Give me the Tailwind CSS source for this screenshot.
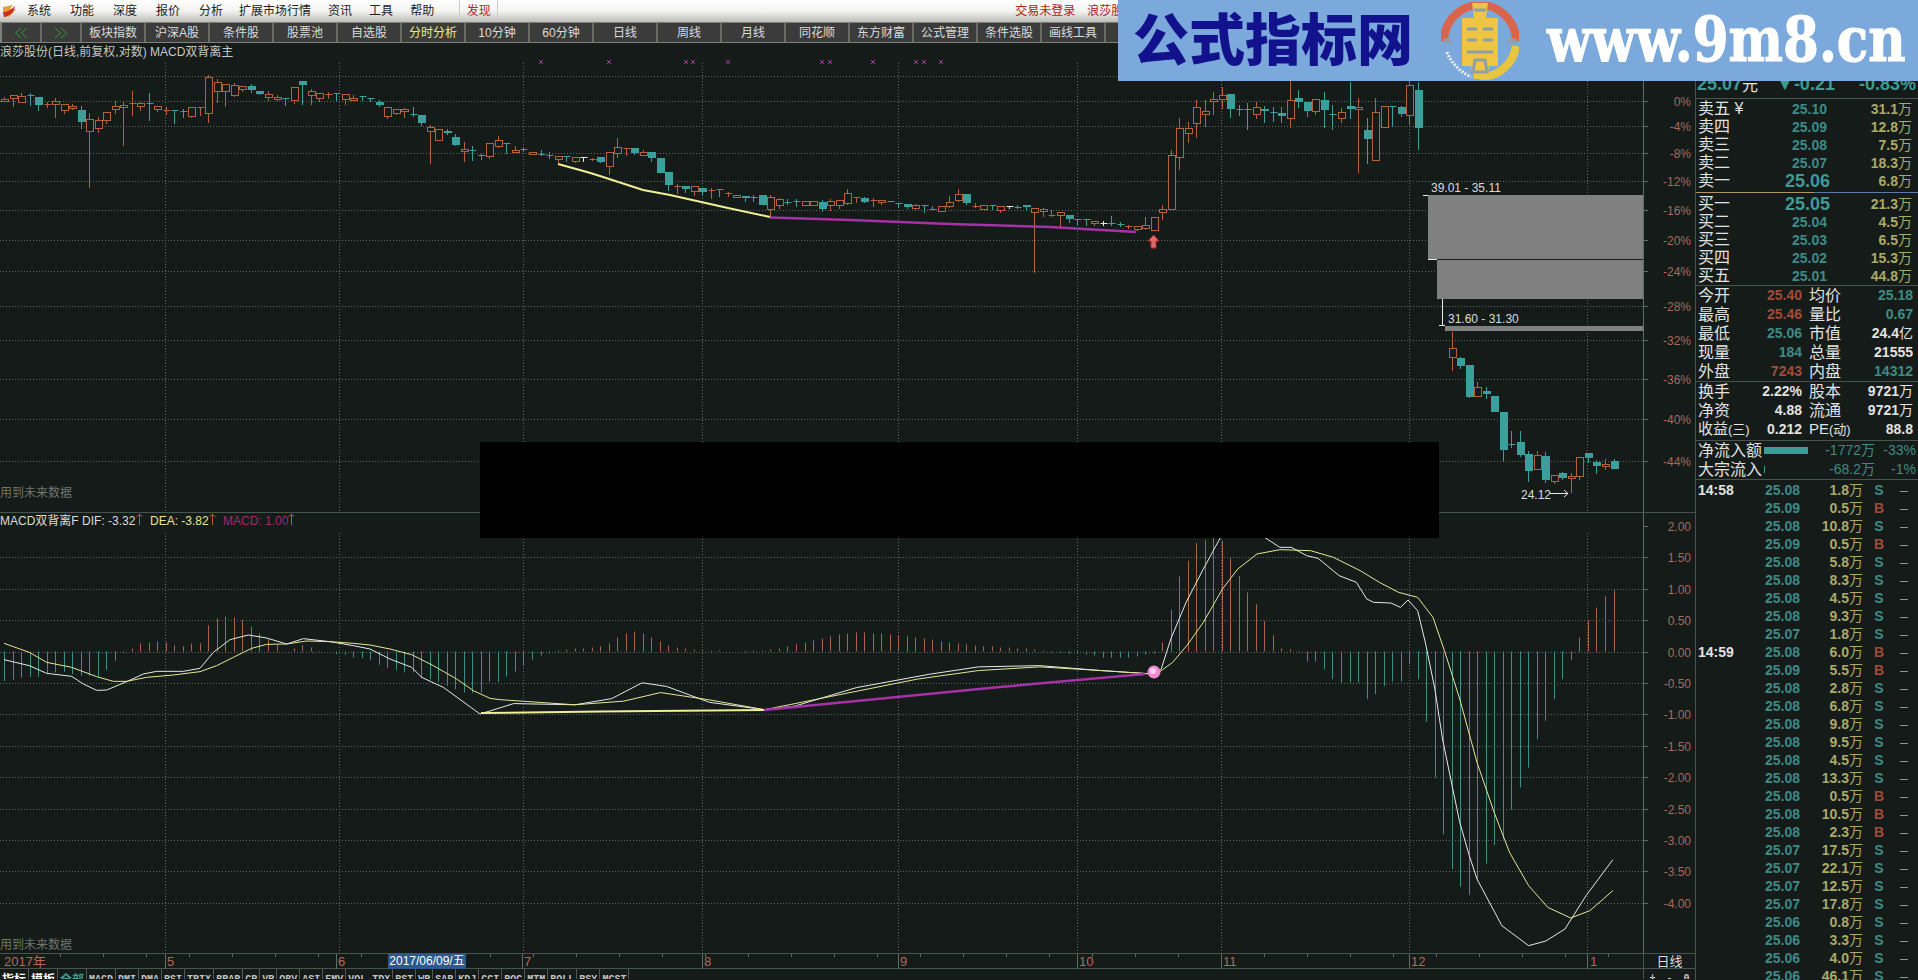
<!DOCTYPE html>
<html lang="zh-CN">

<head>
  <meta charset="UTF-8" />
  <title>浪莎股份 日线</title>
  <script src="https://cdn.jsdelivr.net/npm/@tailwindcss/browser@4"></script>
</head>

<body class="bg-[#141b18] font-['Liberation_Sans','Noto_Sans_CJK_SC',sans-serif]">
  <div class="relative w-[1918px] h-[980px] overflow-hidden">

    <!-- menu -->
    <div class="h-[22px] flex items-center bg-gradient-to-b from-white via-[#f3f3f3] to-[#bdbdb8] text-[12px] text-[#222]">
      <svg class="ml-[2px] w-[15px] h-[14px]" viewBox="0 0 15 14">
        <path d="M1 3 L11 1 L8 5 L14 5 L7 13 L1 10 Z" fill="#e8a030" />
        <path d="M1 8 Q7 8 13 2 L11 8 Q6 13 2 13 Z" fill="#c8321e" />
      </svg>
      <div class="ml-[10px] flex gap-[19px]"><span>系统</span><span>功能</span><span>深度</span><span>报价</span><span>分析</span></div>
      <div class="ml-[16px] flex gap-[17px]"><span>扩展市场行情</span><span>资讯</span><span>工具</span><span>帮助</span></div>
      <div class="ml-[25px] w-[39px] h-full flex items-center justify-center border-x border-[#ccc] text-[#b02828]">发现</div>
      <div class="ml-[517px] flex gap-[12px] text-[#b02020]"><span>交易未登录</span><span>浪莎股份</span></div>
    </div>

    <!-- toolbar -->
    <div class="h-[21px] flex bg-[#80807a] py-[1px] pl-[2px] text-[12px] text-[#dcdcdc]">
      <div class="w-[40px] shrink-0 flex items-center justify-center bg-[#3b3b3b] border-r-2 border-[#6a6a62]">
        <svg width="14" height="12" viewBox="0 0 14 12" fill="none" stroke="#2f9f2f"><path d="M7 1L1.500 6L7 11M13 1L7.500 6L13 11" /></svg>
      </div>
      <div class="w-[40px] shrink-0 flex items-center justify-center bg-[#3b3b3b] border-r-2 border-[#6a6a62]">
        <svg width="14" height="12" viewBox="0 0 14 12" fill="none" stroke="#2f9f2f"><path d="M1 1L6.500 6L1 11M7 1L12.500 6L7 11" /></svg>
      </div>
      <div class="w-[64px] shrink-0 flex items-center justify-center bg-[#3b3b3b] border-r-2 border-[#6a6a62]">板块指数</div>
      <div class="w-[64px] shrink-0 flex items-center justify-center bg-[#3b3b3b] border-r-2 border-[#6a6a62]">沪深A股</div>
      <div class="w-[64px] shrink-0 flex items-center justify-center bg-[#3b3b3b] border-r-2 border-[#6a6a62]">条件股</div>
      <div class="w-[64px] shrink-0 flex items-center justify-center bg-[#3b3b3b] border-r-2 border-[#6a6a62]">股票池</div>
      <div class="w-[64px] shrink-0 flex items-center justify-center bg-[#3b3b3b] border-r-2 border-[#6a6a62]">自选股</div>
      <div class="w-[64px] shrink-0 flex items-center justify-center bg-[#3b3b3b] border-r-2 border-[#6a6a62] text-[#eeee80]">分时分析</div>
      <div class="w-[64px] shrink-0 flex items-center justify-center bg-[#3b3b3b] border-r-2 border-[#6a6a62]">10分钟</div>
      <div class="w-[64px] shrink-0 flex items-center justify-center bg-[#3b3b3b] border-r-2 border-[#6a6a62]">60分钟</div>
      <div class="w-[64px] shrink-0 flex items-center justify-center bg-[#3b3b3b] border-r-2 border-[#6a6a62]">日线</div>
      <div class="w-[64px] shrink-0 flex items-center justify-center bg-[#3b3b3b] border-r-2 border-[#6a6a62]">周线</div>
      <div class="w-[64px] shrink-0 flex items-center justify-center bg-[#3b3b3b] border-r-2 border-[#6a6a62]">月线</div>
      <div class="w-[64px] shrink-0 flex items-center justify-center bg-[#3b3b3b] border-r-2 border-[#6a6a62]">同花顺</div>
      <div class="w-[64px] shrink-0 flex items-center justify-center bg-[#3b3b3b] border-r-2 border-[#6a6a62]">东方财富</div>
      <div class="w-[64px] shrink-0 flex items-center justify-center bg-[#3b3b3b] border-r-2 border-[#6a6a62]">公式管理</div>
      <div class="w-[64px] shrink-0 flex items-center justify-center bg-[#3b3b3b] border-r-2 border-[#6a6a62]">条件选股</div>
      <div class="w-[64px] shrink-0 flex items-center justify-center bg-[#3b3b3b] border-r-2 border-[#6a6a62]">画线工具</div>
      <div class="w-[64px] shrink-0 flex items-center justify-center bg-[#3b3b3b] border-r-2 border-[#6a6a62]">设置</div>
    </div>

    <div class="flex h-[937px]">
      <!-- charts -->
      <div class="w-[1695px] shrink-0 flex flex-col">
        <div class="h-[470px] border-b border-[#46564f]">
          <svg class="block text-[12px]" width="1695" height="469" viewBox="0 43 1695 469">
            <g id="main-grid"></g>
            <rect x="1428" y="195" width="215" height="64" fill="#808080" />
            <rect x="1437" y="260" width="206" height="39" fill="#808080" />
            <rect x="1445" y="326" width="198" height="5" fill="#808080" />
            <path d="M1423 195.500H1428M1428 259.500H1437M1442.500 299V325M1439 325.500H1445" stroke="#e8e8e8" />
            <text x="1431" y="192" fill="#dcdcdc">39.01 - 35.11</text>
            <text x="1448" y="323" fill="#dcdcdc">31.60 - 31.30</text>
            <text x="1521" y="499" fill="#dcdcdc">24.12</text>
            <path d="M1550 493.500H1568M1564 490L1568 493.500L1564 497" stroke="#e8e8e8" fill="none" />
            <g id="candles"></g>
            <polyline fill="none" stroke="#f0ef96" stroke-width="2" points="558,164 587,172 600,176 643,190 670,195 728,208 770,217" />
            <polyline fill="none" stroke="#a632a6" stroke-width="2.500" points="770,217.500 850,220 950,224 1050,227 1136,232" />
            <path d="M1153.600 235L1159 241H1156V248H1151V241H1148Z" fill="#e06a6a" stroke="#c02c2c" />
            <g id="marks" stroke="#a03aa0"></g>
            <text x="0" y="56" font-size="12" fill="#c8c8c8">浪莎股份(日线,前复权,对数) MACD双背离主</text>
            <text x="0" y="497" font-size="12" fill="#70766f">用到未来数据</text>
          </svg>
        </div>
        <div class="h-[440px]">
          <svg class="block text-[12px]" width="1695" height="440" viewBox="0 514 1695 440">
            <g id="macd-grid"></g>
            <g id="macd-bars"></g>
            <polyline id="dif" fill="none" stroke="#e8e8e8" />
            <polyline id="dea" fill="none" stroke="#e6e69a" />
            <polyline fill="none" stroke="#f0ef96" stroke-width="2" points="481,714 600,712.500 764,711" />
            <polyline fill="none" stroke="#a632a6" stroke-width="2.500" points="764,711 1000,688 1145,675" />
            <circle cx="1154" cy="673" r="6.500" fill="#f08ad0" />
            <circle cx="1153" cy="672" r="3" fill="#fbd0ee" />
            <text x="0" y="526" font-size="12" fill="#dcdcdc">MACD双背离F</text>
            <text x="82" y="526" font-size="12" fill="#dcdcdc">DIF: -3.32</text>
            <text x="150" y="526" font-size="12" fill="#e6e69a">DEA: -3.82</text>
            <text x="223" y="526" font-size="12" fill="#a8286c">MACD: 1.00</text>
            <path d="M139.500 526V515M136.500 518L139.500 515L142.500 518M212.500 526V515M209.500 518L212.500 515L215.500 518M291.500 526V515M288.500 518L291.500 515L294.500 518" stroke="#b5603c" fill="none" />
            <text x="0" y="950" font-size="12" fill="#70766f">用到未来数据</text>
          </svg>
        </div>
        <!-- date axis -->
        <div class="h-4 flex border-y border-[#46564f] text-[13px] leading-[15px] text-[#b8685a]">
          <div class="relative w-[1643px] shrink-0">
            <svg id="date-ticks" class="absolute inset-0" width="1643" height="15"></svg>
            <span class="absolute left-[4px]">2017年</span>
            <span class="absolute left-[167px]">5</span>
            <span class="absolute left-[338px]">6</span>
            <span class="absolute left-[524px]">7</span>
            <span class="absolute left-[704px]">8</span>
            <span class="absolute left-[900px]">9</span>
            <span class="absolute left-[1079px]">10</span>
            <span class="absolute left-[1223px]">11</span>
            <span class="absolute left-[1411px]">12</span>
            <span class="absolute left-[1590px]">1</span>
            <span class="absolute left-[388px] w-[78px] h-[15px] bg-[#2c5a8c] text-center text-[12px] text-white whitespace-nowrap">2017/06/09/五</span>
          </div>
          <div class="flex-1 border-l border-[#46564f] text-center text-[13px] text-[#dcdcdc]">日线</div>
        </div>
        <!-- indicator tabs -->
        <div class="h-[10px] flex overflow-hidden font-['Liberation_Mono','Noto_Sans_CJK_SC',monospace] text-[10px] font-bold text-[#c4c4c4]">
          <div id="tabs" class="flex"></div>
          <div class="ml-auto w-[52px] flex justify-around border-l border-[#46564f] pt-[2px]"><span>+</span><span>-</span><span>0</span></div>
        </div>
      </div>

      <!-- quote panel -->
      <div class="w-[223px] border-l border-[#46564f] text-[16px] text-[#e2e2e2]">
        <div class="h-[56px] pl-[1px] flex items-end border-b border-[#46564f] text-[18px] font-bold text-[#3f9a95]">
          <span>25.07</span><span class="font-normal text-[#e2e2e2] text-[16px]">元</span>
          <span class="ml-[18px]">▼-0.21</span><span class="ml-auto pr-[2px]">-0.83%</span>
        </div>
        <div class="pl-[2px] pt-px">
          <div class="flex h-[18px] items-center"><span class="w-[70px]">卖五 ¥</span><span class="w-[59px] text-right text-[14px] font-bold text-[#3f8a85]">25.10</span><span class="w-[85px] text-right text-[14px] font-bold text-[#aaaa68]">31.1<span class="font-normal">万</span></span></div>
          <div class="flex h-[18px] items-center"><span class="w-[70px]">卖四</span><span class="w-[59px] text-right text-[14px] font-bold text-[#3f8a85]">25.09</span><span class="w-[85px] text-right text-[14px] font-bold text-[#aaaa68]">12.8<span class="font-normal">万</span></span></div>
          <div class="flex h-[18px] items-center"><span class="w-[70px]">卖三</span><span class="w-[59px] text-right text-[14px] font-bold text-[#3f8a85]">25.08</span><span class="w-[85px] text-right text-[14px] font-bold text-[#aaaa68]">7.5<span class="font-normal">万</span></span></div>
          <div class="flex h-[18px] items-center"><span class="w-[70px]">卖二</span><span class="w-[59px] text-right text-[14px] font-bold text-[#3f8a85]">25.07</span><span class="w-[85px] text-right text-[14px] font-bold text-[#aaaa68]">18.3<span class="font-normal">万</span></span></div>
          <div class="flex h-[18px] items-center"><span class="w-[70px]">卖一</span><span class="w-[62px] text-right text-[18px] font-bold text-[#3f9a95]">25.06</span><span class="w-[82px] text-right text-[14px] font-bold text-[#aaaa68]">6.8<span class="font-normal">万</span></span></div>
        </div>
        <div class="flex h-[3px] items-end"><span class="w-[118px] h-px bg-[#b09468]"></span><span class="flex-1 h-px bg-[#5c7aa8]"></span></div>
        <div class="pl-[2px] pt-[2px] border-b border-[#46564f]">
          <div class="flex h-[18px] items-center"><span class="w-[70px]">买一</span><span class="w-[62px] text-right text-[18px] font-bold text-[#3f9a95]">25.05</span><span class="w-[82px] text-right text-[14px] font-bold text-[#aaaa68]">21.3<span class="font-normal">万</span></span></div>
          <div class="flex h-[18px] items-center"><span class="w-[70px]">买二</span><span class="w-[59px] text-right text-[14px] font-bold text-[#3f8a85]">25.04</span><span class="w-[85px] text-right text-[14px] font-bold text-[#aaaa68]">4.5<span class="font-normal">万</span></span></div>
          <div class="flex h-[18px] items-center"><span class="w-[70px]">买三</span><span class="w-[59px] text-right text-[14px] font-bold text-[#3f8a85]">25.03</span><span class="w-[85px] text-right text-[14px] font-bold text-[#aaaa68]">6.5<span class="font-normal">万</span></span></div>
          <div class="flex h-[18px] items-center"><span class="w-[70px]">买四</span><span class="w-[59px] text-right text-[14px] font-bold text-[#3f8a85]">25.02</span><span class="w-[85px] text-right text-[14px] font-bold text-[#aaaa68]">15.3<span class="font-normal">万</span></span></div>
          <div class="flex h-[18px] items-center"><span class="w-[70px]">买五</span><span class="w-[59px] text-right text-[14px] font-bold text-[#3f8a85]">25.01</span><span class="w-[85px] text-right text-[14px] font-bold text-[#aaaa68]">44.8<span class="font-normal">万</span></span></div>
        </div>
        <div class="pl-[2px] border-b border-[#46564f]">
          <div class="flex h-[19px] items-center"><span class="w-[48px]">今开</span><span class="w-[56px] text-right text-[14px] font-bold text-[#a04c3c]">25.40</span><span class="ml-[7px] w-[50px]">均价</span><span class="w-[54px] text-right text-[14px] font-bold text-[#3f8a85]">25.18</span></div>
          <div class="flex h-[19px] items-center"><span class="w-[48px]">最高</span><span class="w-[56px] text-right text-[14px] font-bold text-[#a04c3c]">25.46</span><span class="ml-[7px] w-[50px]">量比</span><span class="w-[54px] text-right text-[14px] font-bold text-[#3f8a85]">0.67</span></div>
          <div class="flex h-[19px] items-center"><span class="w-[48px]">最低</span><span class="w-[56px] text-right text-[14px] font-bold text-[#3f8a85]">25.06</span><span class="ml-[7px] w-[50px]">市值</span><span class="w-[54px] text-right text-[14px] font-bold">24.4<span class="font-normal">亿</span></span></div>
          <div class="flex h-[19px] items-center"><span class="w-[48px]">现量</span><span class="w-[56px] text-right text-[14px] font-bold text-[#3f8a85]">184</span><span class="ml-[7px] w-[50px]">总量</span><span class="w-[54px] text-right text-[14px] font-bold">21555</span></div>
          <div class="flex h-[19px] items-center"><span class="w-[48px]">外盘</span><span class="w-[56px] text-right text-[14px] font-bold text-[#a04c3c]">7243</span><span class="ml-[7px] w-[50px]">内盘</span><span class="w-[54px] text-right text-[14px] font-bold text-[#3f8a85]">14312</span></div>
        </div>
        <div class="pl-[2px] pb-[1px] border-b border-[#46564f]">
          <div class="flex h-[19px] items-center"><span class="w-[48px]">换手</span><span class="w-[56px] text-right text-[14px] font-bold">2.22%</span><span class="ml-[7px] w-[50px]">股本</span><span class="w-[54px] text-right text-[14px] font-bold">9721<span class="font-normal">万</span></span></div>
          <div class="flex h-[19px] items-center"><span class="w-[48px]">净资</span><span class="w-[56px] text-right text-[14px] font-bold">4.88</span><span class="ml-[7px] w-[50px]">流通</span><span class="w-[54px] text-right text-[14px] font-bold">9721<span class="font-normal">万</span></span></div>
          <div class="flex h-[19px] items-center"><span class="w-[52px] whitespace-nowrap text-[15px]">收益<span class="text-[13px]">(三)</span></span><span class="w-[52px] text-right text-[14px] font-bold">0.212</span><span class="ml-[7px] w-[50px] whitespace-nowrap text-[15px]">PE<span class="text-[13px]">(动)</span></span><span class="w-[54px] text-right text-[14px] font-bold">88.8</span></div>
        </div>
        <div class="pl-[2px] border-b border-[#46564f]">
          <div class="flex h-[19px] items-center"><span class="w-[66px] whitespace-nowrap">净流入额</span><span class="w-[44px] h-[7px] bg-[#3f9a95]"></span><span class="w-[67px] text-right text-[14px] text-[#3f8a85]">-1772<span>万</span></span><span class="w-[41px] text-right text-[14px] text-[#3f8a85]">-33%</span></div>
          <div class="flex h-[19px] items-center"><span class="w-[66px] whitespace-nowrap">大宗流入</span><span class="w-[44px] h-[7px]"><span class="block w-px h-full bg-[#3f9a95]"></span></span><span class="w-[67px] text-right text-[14px] text-[#3f8a85]">-68.2<span>万</span></span><span class="w-[41px] text-right text-[14px] text-[#3f8a85]">-1%</span></div>
        </div>
        <div id="ticks" class="pl-[2px] pt-px"></div>
      </div>
    </div>

    <!-- black cover over the chart -->
    <div class="absolute left-[480px] top-[442px] w-[959px] h-[96px] bg-black"></div>

    <!-- site banner on top -->
    <div class="absolute left-[1118px] top-0 w-[800px] h-[81px] flex items-center bg-[#7ba9db]">
      <span class="ml-[15px] w-[277px] text-[56px] leading-none font-black text-[#12128c] whitespace-nowrap">公式指标网</span>
      <svg class="ml-[31px] shrink-0" width="78" height="78" viewBox="0 0 78 78">
        <path d="M3 39A36 36 0 0 1 75 39" fill="none" stroke="#d9654c" stroke-width="8" />
        <path d="M75 44A36 36 0 0 1 39 75" fill="none" stroke="#e9c53f" stroke-width="8" />
        <path d="M3 39H11M67 39H75" stroke="#8f9ea8" stroke-width="5" />
        <path d="M31 1H47L45 16H57V64H48L46 77H33L30 64H21V16H33Z" fill="#eec643" />
        <path d="M33 8H45M26 27H36M42 27H52M26 38H36M42 38H52M26 50H52M34 58H44L46 70H32Z" stroke="#8f9ea8" stroke-width="3" fill="none" />
        <path d="M6 50Q12 66 30 75" fill="none" stroke="#f2f2f2" stroke-width="3" stroke-dasharray="2 1.500" />
      </svg>
      <span class="ml-[28px] text-[51.500px] leading-none font-['DejaVu_Serif',serif] font-bold text-white scale-y-[1.2] [-webkit-text-stroke:1px_white] whitespace-nowrap">www.9m8.cn</span>
    </div>
  </div>

  <script>
    // candle: type body-top body-bottom high low, read off the chart
    const SEGMENTS = [
      { from: 0, base: 60, rows: "r 118 122 112 126;r 106 113 106 140;r 108 125 100 126;g 104 106 100 138;g 112 135 112 152;r 131 136 125 145;r 124 133 115 173;r 133 150 133 161;r 139 143 131 150;g 150 186 137 208;r 178 212 158 383;r 181 204 172 218;r 157 179 157 191;r 139 148 124 161;r 136 140 126 258;r 129 133 94 167;r 130 138 125 152;g 130 133 100 182;r 137 148 137 156;r 150 152 142 165;g 150 152 150 193;g 154 156 147 173;r 140 167 140 173;r 141 143 141 167;r 52 158 45 188;r 67 92 58 128;r 72 94 72 140;r 76 106 70 110;r 77 87 77 97;g 78 90 72 99;g 94 101 94 106;r 103 112 92 123;r 112 116 104 122;g 115 117 115 137;r 81 121 81 133;g 64 75 64 134;r 93 106 88 134;r 98 113 98 127;r 102 104 96 116;g 100 102 100 122;r 103 118 103 136;r 113 121 106 121;g 107 109 107 122;g 114 116 114 125;g 125 134 120 140;r 142 167 142 176;r 146 158 146 164;r 148 152 145 173;g 162 165 140 171;g 166 190 166 197;r 200 212 196 312;r 208 239 208 240;g 213 220 208 224;g 232 255 222 258;r 268 272 247 305;g 270 272 258 302;g 284 286 281 300;r 248 288 248 296;r 240 258 228 265" },
      { from: 59, base: 120, rows: "g 70 72 70 103;r 90 97 78 100;g 87 90 85 96;r 95 103 95 105;g 103 104 90 108;g 106 108 95 116;r 107 117 107 130;g 107 109 107 125;r 110 122 110 128;w 110 112 110 125;r 116 121 114 122;g 112 126 112 128;r 97 139 97 165;r 82 98 55 115;r 83 87 83 108;g 85 98 85 104;r 97 104 90 106;g 97 115 97 125;g 113 160 113 160;g 156 194 156 212;r 198 201 193 222;g 199 206 199 220;r 198 212 198 228;g 205 216 205 226;r 210 213 205 238;g 208 211 208 230;r 220 223 215 231;r 224 231 224 233;g 229 234 229 245;g 232 234 226 245;g 226 254 226 256;r 232 268 226 290;r 238 254 233 268;g 245 247 238 256;g 243 245 238 260;r 244 254 244 255;r 244 254 244 255;g 245 266 240 276;r 244 254 238 272;r 241 255 241 268;r 220 250 208 256;r 231 233 231 250;g 235 245 230 248;r 240 244 233 262;r 241 247 241 255;g 244 246 244 246;g 250 252 250 265;g 253 261 253 266;r 256 265 253 270;g 254 256 254 278;g 267 269 258 270;r 259 273 259 276;r 247 259 228 265;r 223 240 207 245;g 222 249 222 255;r 257 259 250 265;r 256 266 256 268;g 256 258 256 270;r 258 270 258 280;w 258 260 258 268;g 260 262 255 268;g 256 260 256 272;r 265 277 265 458;r 268 272 265 290;r 284 286 270 292;r 276 285 276 328;g 286 296 286 310;g 297 299 297 316;g 298 300 296 318;r 302 308 302 318;w 308 310 303 318;g 308 313 287 318;g 313 315 307 320;r 318 320 316 326;r 317 327 317 332;r 316 325 290 330;r 292 329 292 329" },
      { from: 136, base: 0, rows: "r 628 635 615 660;r 466 628 450 628;r 385 472 355 510;r 385 400 365 430;r 322 368 300 415;r 332 341 300 380;r 298 302 275 345;r 285 298 260 326;g 282 326 282 355;g 326 328 315 348;g 327 329 310 390;r 320 342 305 358;g 328 334 318 368;g 336 338 322 365;g 340 348 322 368;r 300 353 240 383;g 294 306 270 325;g 307 333 307 350;r 298 332 298 345;g 300 329 276 383;g 342 345 315 390;r 336 353 325 370;g 318 327 245 358;r 322 328 295 520;g 390 416 355 492;r 337 479 295 479;r 318 380 318 380;g 318 320 318 380;g 322 343 318 350;r 256 344 240 375;g 270 383 245 450" },
      { from: 170, base: 180, rows: "r 503 532 457 572;g 534 557 530 566;g 556 650 556 654;r 622 647 606 652;g 633 641 622 656;g 649 695 649 695;g 697 809 697 845;g 793 795 752 803;g 786 825 753 830;g 823 873 812 905;r 826 866 812 870;g 828 900 815 908;r 885 903 885 912;g 880 893 875 900;r 887 895 878 938;r 832 888 832 900;g 820 835 818 850;g 845 857 840 882;r 853 859 838 870;g 843 866 838 866" }
    ];
    const COLORS = { r: "#b4613c", g: "#3c9f9c", w: "#e8e8e8" };
    const BG = "#141b18";
    const candleX = i => Math.round(4 + 8.516 * i) + 0.5;

    function drawCandles() {
      let out = "";
      SEGMENTS.forEach(seg => {
        seg.rows.split(";").forEach((row, n) => {
          const [t, ...vals] = row.split(" ");
          const [top, bot, hi, lo] = vals.map(v => Math.round(seg.base + v / 3));
          const x = candleX(seg.from + n), c = COLORS[t];
          out += `<path d="M${x} ${hi}V${top}M${x} ${bot}V${lo}" stroke="${c}"/>`;
          if (bot - top <= 1) out += `<path d="M${x - 3} ${top + 0.5}H${x + 4}" stroke="${c}"/>`;
          else if (t === "r") out += `<rect x="${x - 3}" y="${top + 0.5}" width="7" height="${bot - top}" fill="${BG}" stroke="${c}"/>`;
          else out += `<rect x="${x - 3.5}" y="${top}" width="8" height="${bot - top}" fill="${c}"/>`;
        });
      });
      document.getElementById("candles").innerHTML = out;
    }

    function grid(id, rows, labels, top, bottom) {
      const vert = [165, 339, 523, 702, 898, 1077, 1221, 1409, 1587];
      let out = "";
      rows.forEach(y => out += `<path d="M0 ${y}.5H1643" stroke="#5d6b63" stroke-dasharray="1 2"/>`);
      vert.forEach(x => out += `<path d="M${x}.5 ${top}V${bottom}" stroke="#5d6b63" stroke-dasharray="1 2"/>`);
      labels.forEach(([t, y]) => out += `<path d="M1643 ${y}.5H1648" stroke="#5c7068"/><text x="1691" y="${y + 5}" text-anchor="end" fill="#a96a5c">${t}</text>`);
      out += `<path d="M1643.500 ${top - 20}V${bottom}" stroke="#5c7068"/>`;
      document.getElementById(id).innerHTML = out;
    }

    const MAIN_LABELS = [["0%", 101], ["-4%", 126], ["-8%", 153], ["-12%", 181], ["-16%", 210], ["-20%", 240], ["-24%", 271], ["-28%", 306], ["-32%", 340], ["-36%", 379], ["-40%", 419], ["-44%", 461]];
    grid("main-grid", [76, ...MAIN_LABELS.map(l => l[1])], MAIN_LABELS, 63, 513);
    const MACD_LABELS = ["2.00", "1.50", "1.00", "0.50", "0.00", "-0.50", "-1.00", "-1.50", "-2.00", "-2.50", "-3.00", "-3.50", "-4.00"].map((t, k) => [t, Math.round(527 + 31.4 * k)]);
    grid("macd-grid", MACD_LABELS.slice(1).map(l => l[1]), MACD_LABELS, 534, 954);
    drawCandles();

    document.getElementById("marks").innerHTML = [541, 609, 686, 693, 728, 822, 830, 873, 916, 924, 941]
      .map(x => `<path d="M${x - 2} 60L${x + 2} 64M${x + 2} 60L${x - 2} 64"/>`).join("");

    // macd histogram, in chart pixels above/below the zero line
    const z9 = [575, 572, 565, 563, 563, 553, 550, 548, 555, 560, 560, 562, 542, 515, 492, 478, 463, 460, 457, 460, 468, 472, 463, 462, 408, 388, 382, 385, 393, 412, 433, 450, 468, 487, 478, 468, 475, 485, 487, 495, 497, 505, 507, 512, 527, 537, 543, 550, 550, 567, 570, 578, 590, 600, 610, 612, 610, 578, 578].map(y => (487 - y) / 3);
    const mid = [-25, -20, -14, -8, -4, -2, 1, 2, 3, 3, 4, 5, 8, 14, 18, 20, 18, 14, 10, 6, 4, 3, 2, 2, 1, 1, 0, 0, 1, 1, 1, 2, 3, 5, 7, 9, 11, 13, 15, 17, 18, 19, 19, 18, 18, 17, 16, 15, 14, 13, 12, 10, 9, 8, 7, 6, 5, 5, 4, 4, 3, 3, 2, 1, -1, -1, -2, -2, -3, -4, -6, -6, -6, -6, -5, -3, -2];
    const z10 = [370, 272, 172, 125, 72, 62, 55, 65, 117, 170, 220, 255, 305, 348, 388, 390, 395, 427, 427, 450, 480, 490, 490, 490, 540, 525, 500, 487, 487, 435, 480, 608, 775, 945, 1050, 1103, 1127, 1080, 1033, 977, 960, 872, 805, 745, 660, 605, 540, 480, 423, 355, 303, 265, 232, 213].map(y => (397 - y) / 3);
    document.getElementById("macd-bars").innerHTML = [...z9, ...mid, ...z10].map((h, i) => {
      const x = candleX(i), c = h > 0 ? "#a8644a" : "#3f8d88";
      return h ? `<path d="M${x} 652.500V${652.5 - h}" stroke="${c}"/>` : "";
    }).join("");

    const fromZ9 = p => `${p[0] / 3},${490 + p[1] / 3}`;
    const fromRef = p => `${p[0] * 1.2232},${p[1] * 1.2232}`;
    const fromZ10 = p => `${1100 + p[0] / 2.613},${520 + p[1] / 3}`;
    document.getElementById("dif").setAttribute("points", [
      ...[[12, 512], [88, 530], [140, 553], [215, 562], [250, 585], [290, 604], [320, 603], [380, 578], [430, 555], [470, 547], [550, 547], [600, 538], [640, 490], [690, 452], [745, 438], [800, 447], [860, 465], [910, 449], [990, 458], [1060, 470], [1110, 480], [1170, 510], [1235, 535], [1265, 565], [1330, 595], [1440, 675]].map(fromZ9),
      ...[[420, 576], [470, 577], [500, 572], [525, 559], [545, 562], [580, 575], [625, 581], [650, 578], [700, 563], [760, 552], [800, 546], [850, 545], [900, 549], [945, 552]].map(fromRef),
      ...[[160, 450], [185, 360], [225, 250], [270, 150], [315, 55], [370, -30], [430, 55], [470, 85], [500, 85], [540, 110], [570, 118], [625, 170], [670, 190], [697, 240], [715, 250], [760, 252], [785, 265], [805, 243], [830, 275], [850, 370], [875, 510], [895, 660], [920, 800], [940, 910], [965, 1010], [985, 1080], [1050, 1220], [1120, 1280], [1165, 1266], [1215, 1230], [1270, 1130], [1340, 1022]].map(fromZ10)
    ].join(" "));
    document.getElementById("dea").setAttribute("points", [
      ...[[12, 463], [88, 490], [140, 520], [215, 535], [290, 563], [340, 577], [380, 577], [440, 565], [520, 558], [600, 548], [650, 530], [700, 505], [755, 478], [800, 466], [860, 465], [920, 456], [990, 458], [1060, 463], [1110, 468], [1170, 480], [1235, 497], [1300, 530], [1370, 570], [1420, 605], [1470, 628], [1500, 632]].map(fromZ9),
      ...[[470, 577], [510, 574], [540, 567], [580, 573], [625, 581], [680, 570], [750, 556], [800, 549], [850, 546], [900, 549], [945, 552]].map(fromRef),
      ...[[160, 455], [190, 430], [230, 375], [270, 310], [320, 210], [360, 150], [410, 105], [470, 92], [550, 95], [610, 115], [680, 155], [730, 190], [780, 220], [830, 235], [870, 295], [900, 395], [940, 540], [985, 730], [1030, 880], [1070, 1000], [1120, 1100], [1170, 1165], [1230, 1197], [1280, 1175], [1340, 1115]].map(fromZ10)
    ].join(" "));

    // date axis ticks
    let ticks = "";
    [165, 336, 522, 702, 898, 1077, 1221, 1409, 1587].forEach(x => ticks += `<path d="M${x}.5 0V15" stroke="#5c7068"/>`);
    for (let x = 60; x < 1640; x += 43) ticks += `<path d="M${x}.5 0V3" stroke="#5c7068"/>`;
    document.getElementById("date-ticks").innerHTML = ticks;

    // bottom tabs
    document.getElementById("tabs").innerHTML = ["指标", "模板", "全部", "MACD", "DMI", "DMA", "RSI", "TRIX", "BRAR", "CR", "VR", "OBV", "ASI", "EMV", "VOL-TDX", "RST", "WR", "SAR", "KDJ", "CCI", "ROC", "MTM", "BOLL", "PSY", "MCST"].map((t, i) =>
      `<span class="px-[2px] pt-[3px] border-r border-[#555] whitespace-nowrap ${i === 2 ? "text-[#3f9a95] text-[12px]" : i < 2 ? "text-white text-[12px]" : ""}">${t}</span>`).join("");

    // tick list
    const TICKS = "14:58 25.08 1.8 S;_ 25.09 0.5 B;_ 25.08 10.8 S;_ 25.09 0.5 B;_ 25.08 5.8 S;_ 25.08 8.3 S;_ 25.08 4.5 S;_ 25.08 9.3 S;_ 25.07 1.8 S;14:59 25.08 6.0 B;_ 25.09 5.5 B;_ 25.08 2.8 S;_ 25.08 6.8 S;_ 25.08 9.8 S;_ 25.08 9.5 S;_ 25.08 4.5 S;_ 25.08 13.3 S;_ 25.08 0.5 B;_ 25.08 10.5 B;_ 25.08 2.3 B;_ 25.07 17.5 S;_ 25.07 22.1 S;_ 25.07 12.5 S;_ 25.07 17.8 S;_ 25.06 0.8 S;_ 25.06 3.3 S;_ 25.06 4.0 S;_ 25.06 46.1 S";
    document.getElementById("ticks").innerHTML = TICKS.split(";").map(r => {
      const [time, price, vol, side] = r.split(" ");
      return `<div class="flex h-[18px] items-center text-[14px] font-bold">
        <span class="w-[50px] text-[#e2e2e2]">${time === "_" ? "" : time}</span>
        <span class="w-[52px] text-right text-[#3f8a85]">${price}</span>
        <span class="w-[63px] text-right text-[#aaaa68]">${vol}<span class="font-normal">万</span></span>
        <span class="w-[32px] text-center ${side === "S" ? "text-[#3f8a85]" : "text-[#a04c3c]"}">${side}</span>
        <span class="w-[18px] text-center font-normal text-[#8a9a94]">–</span>
      </div>`;
    }).join("");
  </script>
</body>

</html>
